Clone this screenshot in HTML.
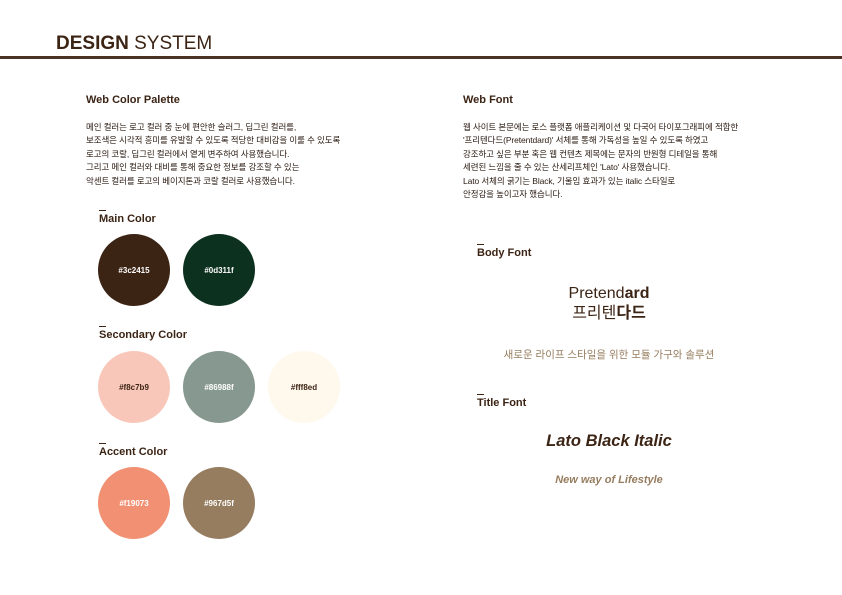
<!DOCTYPE html>
<html><head><meta charset="utf-8"><style>
*{margin:0;padding:0;box-sizing:border-box}
body{width:842px;height:595px;background:#fff;position:relative;overflow:hidden;font-family:"Liberation Sans","Noto Sans CJK KR",sans-serif;color:#3c2415}
.a{position:absolute;white-space:nowrap}
.h{font-size:11px;font-weight:bold}
.p{font-size:8.5px;line-height:13.4px;color:#2a1a10;letter-spacing:-0.1px}
.lab{font-size:11px;font-weight:bold;color:#3c2415}
.lab:before{content:"";position:absolute;left:0;top:-3px;width:7px;height:1px;background:#3c2415}
.c{position:absolute;width:72px;height:72px;border-radius:50%;display:flex;align-items:center;justify-content:center;font-size:8px;font-weight:bold;color:#fff}
</style></head><body>
<div class="a" style="left:56px;top:33px;font-size:19px;color:#3c2415"><b>DESIGN</b> SYSTEM</div>
<div class="a" style="left:0;top:56px;width:842px;height:3px;background:#4a3325"></div>

<div class="a h" style="left:86px;top:94px">Web Color Palette</div>
<div class="a p" style="left:86px;top:121px">메인 컬러는 로고 컬러 중 눈에 편안한 슬러그, 딥그린 컬러를,<br>보조색은 시각적 흥미를 유발할 수 있도록 적당한 대비감을 이룰 수 있도록<br>로고의 코랄, 딥그린 컬러에서 옅게 변주하여 사용했습니다.<br>그리고 메인 컬러와 대비를 통해 중요한 정보를 강조할 수 있는<br>악센트 컬러를 로고의 베이지톤과 코랄 컬러로 사용했습니다.</div>

<div class="a lab" style="left:99px;top:213px">Main Color</div>
<div class="c" style="left:98px;top:234px;background:#3c2415">#3c2415</div>
<div class="c" style="left:183px;top:234px;background:#0d311f">#0d311f</div>

<div class="a lab" style="left:99px;top:329px">Secondary Color</div>
<div class="c" style="left:98px;top:351px;background:#f8c7b9;color:#3c2415">#f8c7b9</div>
<div class="c" style="left:183px;top:351px;background:#86988f">#86988f</div>
<div class="c" style="left:268px;top:351px;background:#fff8ed;color:#3c2415">#fff8ed</div>

<div class="a lab" style="left:99px;top:446px">Accent Color</div>
<div class="c" style="left:98px;top:467px;background:#f19073">#f19073</div>
<div class="c" style="left:183px;top:467px;background:#967d5f">#967d5f</div>

<div class="a h" style="left:463px;top:94px">Web Font</div>
<div class="a p" style="left:463px;top:121px">웹 사이트 본문에는 로스 플랫폼 애플리케이션 및 다국어 타이포그래피에 적합한<br>'프리텐다드(Pretentdard)' 서체를 통해 가독성을 높일 수 있도록 하였고<br>강조하고 싶은 부분 혹은 웹 컨텐츠 제목에는 문자의 반원형 디테일을 통해<br>세련된 느낌을 줄 수 있는 산세리프체인 'Lato' 사용했습니다.<br>Lato 서체의 굵기는 Black, 기울임 효과가 있는 italic 스타일로<br>안정감을 높이고자 했습니다.</div>

<div class="a lab" style="left:477px;top:247px">Body Font</div>
<div class="a" style="left:509px;width:200px;top:284px;text-align:center;font-size:16px;line-height:20px;color:#3c2415">Pretend<b>ard</b><br>프리텐<b>다드</b></div>
<div class="a" style="left:459px;width:300px;top:347px;text-align:center;font-size:10.5px;color:#967d5f">새로운 라이프 스타일을 위한 모듈 가구와 솔루션</div>

<div class="a lab" style="left:477px;top:397px">Title Font</div>
<div class="a" style="left:459px;width:300px;top:432px;text-align:center;font-size:16.5px;font-weight:bold;font-style:italic;color:#3c2415">Lato Black Italic</div>
<div class="a" style="left:459px;width:300px;top:474px;text-align:center;font-size:11px;font-weight:bold;font-style:italic;color:#967d5f">New way of Lifestyle</div>
</body></html>
